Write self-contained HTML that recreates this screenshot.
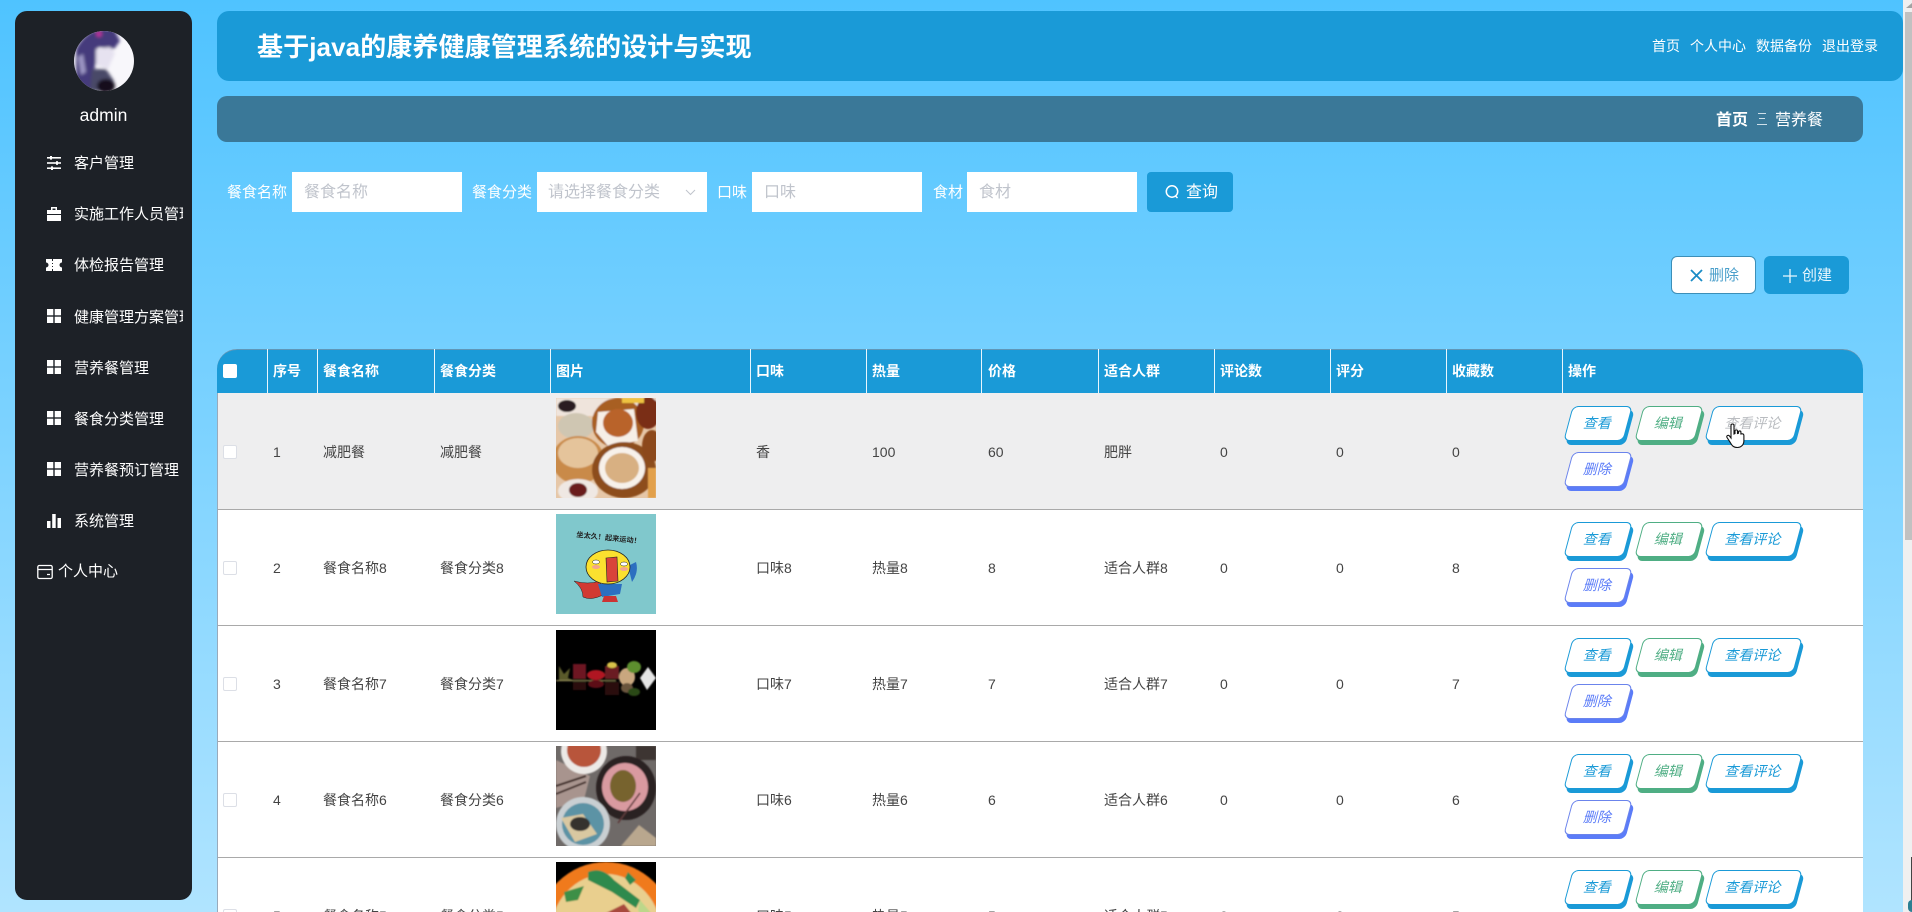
<!DOCTYPE html>
<html lang="zh"><head><meta charset="utf-8"><title>营养餐</title>
<style>
*{box-sizing:border-box}
html,body{margin:0;width:1912px;height:912px;overflow:hidden}
#root{position:absolute;left:0;top:0;width:1912px;height:912px;overflow:hidden;background:linear-gradient(180deg,#4fc3ff 0%,#b0e4ff 100%);font-family:"Liberation Sans","Noto Sans CJK SC",sans-serif;font-size:14px;color:#444}
.a{position:absolute;white-space:nowrap}
#side{position:absolute;left:15px;top:11px;width:177px;height:889px;background:#1d2127;border-radius:12px}
.mi{position:absolute;left:74px;width:109px;overflow:hidden;white-space:nowrap;color:#fff;font-size:15px;line-height:22px;height:22px}
.ic{position:absolute;left:46px;width:16px;height:16px}
#head{position:absolute;left:217px;top:11px;width:1686px;height:70px;background:#1a9ad7;border-radius:12px}
#crumb{position:absolute;left:217px;top:96px;width:1646px;height:46px;background:#3a7898;border-radius:10px}
.lb{position:absolute;top:183px;font-size:15px;line-height:20px;color:#fff}
.in{position:absolute;top:172px;width:170px;height:40px;background:#fff;color:#c0c4cc;font-size:16px;line-height:42px;padding-left:12px}
#tb{position:absolute;left:217px;top:349px;width:1646px;height:563px;background:#fff;border-left:1px solid #9ab;border-radius:20px 20px 0 0;overflow:hidden}
#th{position:absolute;left:217px;top:349px;width:1646px;height:44px;background:#1a9ad7;border-radius:20px 20px 0 0;border-top:1px solid #5f97b8}
.h{position:absolute;top:361px;color:#fff;font-weight:bold;font-size:14px;line-height:20px}
.sep{position:absolute;top:349px;width:1px;height:44px;background:#e8f6fd}
.line{position:absolute;left:218px;width:1645px;height:1px;background:#a9a9a9}
.t{position:absolute;line-height:20px;font-size:14px;color:#444;white-space:nowrap}
.cb{position:absolute;left:223px;width:14px;height:14px;background:#fff;border:1px solid #dcdfe6;border-radius:2px}
.b{position:absolute;height:35px;width:60px;transform:skewX(-15deg);background:#fff;border:1px solid;border-radius:6px;text-align:center;font-size:14px;line-height:33px}
.b1{color:#1a9ad7;border-color:#1a9ad7;box-shadow:3px 4px 0 #1a9ad7}
.b2{color:#4fae84;border-color:#4fae84;box-shadow:3px 4px 0 #4fae84}
.b3{color:#5b7cf8;border-color:#6b84ec;box-shadow:3px 4px 0 #5b7cf8}
.w{width:89px}
.img{position:absolute;left:556px;width:100px;height:100px}
</style></head><body><div id="root">

<div id="side"></div>
<svg class="a" style="left:74px;top:31px" width="60" height="60" viewBox="0 0 60 60">
<defs><clipPath id="cc"><circle cx="30" cy="30" r="30"/></clipPath><filter id="bl"><feGaussianBlur stdDeviation="1.500"/></filter><filter id="s"><feGaussianBlur stdDeviation=".7"/></filter></defs>
<g clip-path="url(#cc)"><rect width="60" height="60" fill="#f8f7fb"/>
<g filter="url(#bl)"><path d="M2 60V18C8 6 18-2 28-2h12l6 12-6 8-16-2-2 16-4 14-2 14z" fill="#453a7c"/><circle cx="25" cy="3" r="3" fill="#b8309a"/><path d="M22 18l14-2 5 6-7 16-12-4z" fill="#e6e2f0"/><path d="M18 38l14 0 8 12-8 10H16z" fill="#4a4868"/><ellipse cx="32" cy="55" rx="9" ry="7" fill="#14101c"/><path d="M4 26l5-3 3 18-5 3z" fill="#9c96c4"/></g></g></svg>
<div class="a" style="left:15px;top:104px;width:177px;text-align:center;color:#fff;font-size:17.5px;line-height:22px">admin</div>

<svg class="ic" style="top:155px" viewBox="0 0 16 16" fill="#fff"><rect x="1" y="2" width="14" height="1.600"/><rect x="1" y="7.200" width="14" height="1.600"/><rect x="1" y="12.400" width="14" height="1.600"/><rect x="4" y="1" width="2" height="3.600"/><rect x="10" y="6.200" width="2" height="3.600"/><rect x="5" y="11.400" width="2" height="3.600"/></svg>
<div class="mi" style="top:153px">客户管理</div>
<svg class="ic" style="top:206px" viewBox="0 0 16 16" fill="#fff"><path d="M5 1h6v3h4v4H1V4h4zM6.500 2.500V4h3V2.500zM1 9h14v6H1z"/></svg>
<div class="mi" style="top:204px">实施工作人员管理</div>
<svg class="ic" style="top:257px" viewBox="0 0 16 16" fill="#fff"><path d="M0 2h6v2h1V2h9v3.500a2.500 2.500 0 0 0 0 5V14H7v-2H6v2H0v-3.500a2.500 2.500 0 0 0 0-5zM6 6v1h1V6zm0 3v1h1V9z"/></svg>
<div class="mi" style="top:255px">体检报告管理</div>
<svg class="ic" style="top:308px" viewBox="0 0 16 16" fill="#fff"><rect x="1" y="1" width="6.300" height="6.300"/><rect x="8.700" y="1" width="6.300" height="6.300"/><rect x="1" y="8.700" width="6.300" height="6.300"/><rect x="8.700" y="8.700" width="6.300" height="6.300"/></svg>
<div class="mi" style="top:307px">健康管理方案管理</div>
<svg class="ic" style="top:359px" viewBox="0 0 16 16" fill="#fff"><rect x="1" y="1" width="6.300" height="6.300"/><rect x="8.700" y="1" width="6.300" height="6.300"/><rect x="1" y="8.700" width="6.300" height="6.300"/><rect x="8.700" y="8.700" width="6.300" height="6.300"/></svg>
<div class="mi" style="top:358px">营养餐管理</div>
<svg class="ic" style="top:410px" viewBox="0 0 16 16" fill="#fff"><rect x="1" y="1" width="6.300" height="6.300"/><rect x="8.700" y="1" width="6.300" height="6.300"/><rect x="1" y="8.700" width="6.300" height="6.300"/><rect x="8.700" y="8.700" width="6.300" height="6.300"/></svg>
<div class="mi" style="top:409px">餐食分类管理</div>
<svg class="ic" style="top:461px" viewBox="0 0 16 16" fill="#fff"><rect x="1" y="1" width="6.300" height="6.300"/><rect x="8.700" y="1" width="6.300" height="6.300"/><rect x="1" y="8.700" width="6.300" height="6.300"/><rect x="8.700" y="8.700" width="6.300" height="6.300"/></svg>
<div class="mi" style="top:460px">营养餐预订管理</div>
<svg class="ic" style="top:513px" viewBox="0 0 16 16" fill="#fff"><rect x="1" y="8" width="3.500" height="7"/><rect x="6.200" y="1" width="3.500" height="14"/><rect x="11.500" y="5" width="3.500" height="10"/></svg>
<div class="mi" style="top:511px">系统管理</div>
<svg class="ic" style="left:37px;top:564px" viewBox="0 0 16 16" fill="none" stroke="#fff" stroke-width="1.300"><rect x=".8" y="1.500" width="14.400" height="13" rx="1.500"/><path d="M1 5.500h14M10 10.500h3"/></svg>
<div class="mi" style="left:58px;top:561px">个人中心</div>

<div id="head"></div>
<div class="a" style="left:257px;top:30px;color:#fff;font-weight:bold;font-size:26px;letter-spacing:.1px;line-height:34px">基于java的康养健康管理系统的设计与实现</div>
<div class="a" style="left:1652px;top:36px;color:#fff;line-height:20px">首页</div>
<div class="a" style="left:1690px;top:36px;color:#fff;line-height:20px">个人中心</div>
<div class="a" style="left:1756px;top:36px;color:#fff;line-height:20px">数据备份</div>
<div class="a" style="left:1822px;top:36px;color:#fff;line-height:20px">退出登录</div>

<div id="crumb"></div>
<div class="a" style="left:1716px;top:110px;color:#fff;font-weight:bold;font-size:16px;line-height:22px">首页</div>
<svg class="a" style="left:1757px;top:113px" width="10" height="12" fill="#cfe0ea"><rect x="1" y="0" width="8" height="1"/><rect x="2" y="5" width="6" height="1"/><rect x="0" y="11" width="10" height="1"/></svg>
<div class="a" style="left:1775px;top:110px;color:#fff;font-size:16px;line-height:22px">营养餐</div>

<div class="lb" style="left:227px">餐食名称</div>
<div class="in" style="left:292px">餐食名称</div>
<div class="lb" style="left:472px">餐食分类</div>
<div class="in" style="left:537px;padding-left:11px">请选择餐食分类</div>
<svg class="a" style="left:685px;top:189px" width="11" height="7" fill="none" stroke="#c0c4cc" stroke-width="1"><path d="M1 1l4.500 4.500L10 1"/></svg>
<div class="lb" style="left:717px">口味</div>
<div class="in" style="left:752px">口味</div>
<div class="lb" style="left:933px">食材</div>
<div class="in" style="left:967px">食材</div>
<div class="a" style="left:1147px;top:172px;width:86px;height:40px;background:#1a9ad7;border-radius:4px"></div>
<svg class="a" style="left:1164px;top:184px" width="16" height="16" fill="none" stroke="#fff" stroke-width="1.500"><circle cx="8" cy="7.500" r="5.700"/><path d="M11.500 12l2 2"/></svg>
<div class="a" style="left:1186px;top:182px;color:#fff;font-size:16px;line-height:22px">查询</div>

<div class="a" style="left:1671px;top:256px;width:85px;height:38px;background:#fff;border:1px solid #3c8fb8;border-radius:6px"></div>
<svg class="a" style="left:1690px;top:269px" width="13" height="13" fill="none" stroke="#1a8cc6" stroke-width="1.800"><path d="M1 1l11 11M12 1L1 12"/></svg>
<div class="a" style="left:1709px;top:265px;color:#4a9fcb;font-size:15px;line-height:22px">删除</div>
<div class="a" style="left:1764px;top:256px;width:85px;height:38px;background:#1a9ad7;border-radius:6px"></div>
<svg class="a" style="left:1783px;top:269px" width="14" height="14" fill="none" stroke="#e8f6fd" stroke-width="1.300"><path d="M7 0v14M0 7h14"/></svg>
<div class="a" style="left:1802px;top:265px;color:#e8f6fd;font-size:15px;line-height:22px">创建</div>

<div id="tb"></div>
<div class="a" style="left:218px;top:393px;width:1645px;height:116px;background:#eeeeef"></div>
<div id="th"></div>
<div class="a" style="left:223px;top:364px;width:14px;height:14px;background:#fff;border-radius:2px"></div>
<div class="sep" style="left:267px"></div><div class="sep" style="left:317px"></div><div class="sep" style="left:434px"></div><div class="sep" style="left:550px"></div><div class="sep" style="left:750px"></div><div class="sep" style="left:866px"></div><div class="sep" style="left:981px"></div><div class="sep" style="left:1098px"></div><div class="sep" style="left:1214px"></div><div class="sep" style="left:1330px"></div><div class="sep" style="left:1446px"></div><div class="sep" style="left:1562px"></div>
<div class="h" style="left:273px">序号</div><div class="h" style="left:323px">餐食名称</div><div class="h" style="left:440px">餐食分类</div><div class="h" style="left:556px">图片</div><div class="h" style="left:756px">口味</div><div class="h" style="left:872px">热量</div><div class="h" style="left:988px">价格</div><div class="h" style="left:1104px">适合人群</div><div class="h" style="left:1220px">评论数</div><div class="h" style="left:1336px">评分</div><div class="h" style="left:1452px">收藏数</div><div class="h" style="left:1568px">操作</div>

<div class="line" style="top:509px"></div><div class="line" style="top:625px"></div><div class="line" style="top:741px"></div><div class="line" style="top:857px"></div>

<!-- row 1 -->
<div class="cb" style="top:445px"></div>
<div class="t" style="left:273px;top:442px">1</div><div class="t" style="left:323px;top:442px">减肥餐</div><div class="t" style="left:440px;top:442px">减肥餐</div><div class="t" style="left:756px;top:442px">香</div><div class="t" style="left:872px;top:442px">100</div><div class="t" style="left:988px;top:442px">60</div><div class="t" style="left:1104px;top:442px">肥胖</div><div class="t" style="left:1220px;top:442px">0</div><div class="t" style="left:1336px;top:442px">0</div><div class="t" style="left:1452px;top:442px">0</div>
<svg class="img" style="top:398px" viewBox="0 0 100 100"><rect width="100" height="100" fill="#e6c7a8"/><g filter="url(#s)"><rect width="100" height="18" fill="#efe4dc"/><ellipse cx="11" cy="8" rx="9" ry="6" fill="#2b1f22"/><ellipse cx="20" cy="28" rx="18" ry="13" fill="#cfc6b2"/><ellipse cx="62" cy="25" rx="26" ry="25" fill="#a85f22"/><path d="M42 14l36-3 4 32-30 5-12-14z" fill="#f6efe7"/><ellipse cx="62" cy="25" rx="15" ry="14" fill="#b9642c"/><ellipse cx="22" cy="62" rx="26" ry="24" fill="#c98a4a"/><ellipse cx="22" cy="55" rx="20" ry="15" fill="#e5c49b"/><ellipse cx="68" cy="72" rx="32" ry="28" fill="#8d4d1a"/><ellipse cx="66" cy="70" rx="23" ry="21" fill="#f7f1ea"/><ellipse cx="66" cy="70" rx="17" ry="15" fill="#d8b082"/><ellipse cx="22" cy="93" rx="20" ry="12" fill="#efe8e3"/><ellipse cx="22" cy="92" rx="9" ry="7" fill="#6a1a1c"/><ellipse cx="92" cy="15" rx="12" ry="16" fill="#7a2e17"/><path d="M66 0h22v5H66z" fill="#eec23f"/><ellipse cx="96" cy="48" rx="10" ry="16" fill="#8c4a1b"/><rect x="92" y="70" width="8" height="30" fill="#e2a04c"/></g></svg>
<div class="b b1" style="left:1568px;top:406px">查看</div><div class="b b2" style="left:1639px;top:406px">编辑</div><div class="b b1 w" style="left:1709px;top:406px;color:#b9bcc0">查看评论</div><div class="b b3" style="left:1568px;top:452px">删除</div>

<!-- row 2 -->
<div class="cb" style="top:561px"></div>
<div class="t" style="left:273px;top:558px">2</div><div class="t" style="left:323px;top:558px">餐食名称8</div><div class="t" style="left:440px;top:558px">餐食分类8</div><div class="t" style="left:756px;top:558px">口味8</div><div class="t" style="left:872px;top:558px">热量8</div><div class="t" style="left:988px;top:558px">8</div><div class="t" style="left:1104px;top:558px">适合人群8</div><div class="t" style="left:1220px;top:558px">0</div><div class="t" style="left:1336px;top:558px">0</div><div class="t" style="left:1452px;top:558px">8</div>
<svg class="img" style="top:514px" viewBox="0 0 100 100"><rect width="100" height="100" fill="#80c8cc"/><text x="20" y="26" font-size="7.200" font-weight="bold" fill="#222" transform="rotate(6 50 26)" font-family="'Noto Sans CJK SC',sans-serif">坐太久！起来运动！</text><path d="M18 67q14 4 26 0l3 14q-12 6-20 2 0-9-9-16z" fill="#d13a32" stroke="#222" stroke-width=".5"/><path d="M72 52l8-4q3 10-4 20z" fill="#2c6fc0"/><path d="M42 70h24l-2 10-18 3z" fill="#2c6fc0"/><path d="M48 82h12l2 6H46z" fill="#c33"/><ellipse cx="52" cy="53" rx="22" ry="17" fill="#fbe12f" stroke="#222" stroke-width=".8"/><path d="M50 44l11-1 1 24-11 1z" fill="#d9433a" stroke="#222" stroke-width=".6"/><ellipse cx="40" cy="48" rx="3.500" ry="2" fill="#fff" stroke="#222" stroke-width=".5"/><ellipse cx="68" cy="50" rx="3.500" ry="2" fill="#fff" stroke="#222" stroke-width=".5"/><ellipse cx="40" cy="53" rx="4" ry="2" fill="#f3a58d"/><ellipse cx="68" cy="55" rx="4" ry="2" fill="#f3a58d"/></svg>
<div class="b b1" style="left:1568px;top:522px">查看</div><div class="b b2" style="left:1639px;top:522px">编辑</div><div class="b b1 w" style="left:1709px;top:522px">查看评论</div><div class="b b3" style="left:1568px;top:568px">删除</div>

<!-- row 3 -->
<div class="cb" style="top:677px"></div>
<div class="t" style="left:273px;top:674px">3</div><div class="t" style="left:323px;top:674px">餐食名称7</div><div class="t" style="left:440px;top:674px">餐食分类7</div><div class="t" style="left:756px;top:674px">口味7</div><div class="t" style="left:872px;top:674px">热量7</div><div class="t" style="left:988px;top:674px">7</div><div class="t" style="left:1104px;top:674px">适合人群7</div><div class="t" style="left:1220px;top:674px">0</div><div class="t" style="left:1336px;top:674px">0</div><div class="t" style="left:1452px;top:674px">7</div>
<svg class="img" style="top:630px" viewBox="0 0 100 100"><rect width="100" height="100" fill="#000"/><g filter="url(#s)"><path d="M3 36l5 8 6-6-2 10 5 2-14 0z" fill="#5a5a2c"/><rect x="17" y="34" width="13" height="15" fill="#6d1422"/><ellipse cx="40" cy="45" rx="9" ry="5" fill="#b01424"/><rect x="49" y="36" width="14" height="13" fill="#6a1a20"/><ellipse cx="56" cy="35" rx="5" ry="3" fill="#d8c24a"/><ellipse cx="71" cy="47" rx="8" ry="9" fill="#c9a77f"/><ellipse cx="78" cy="37" rx="7" ry="6" fill="#5d8f2d"/><path d="M84 48l8-11 8 11-9 12z" fill="#e5e5e5"/><rect x="0" y="50" width="60" height="1.200" fill="#8f8a55"/><rect x="17" y="52" width="13" height="8" fill="#2b0a10"/><ellipse cx="40" cy="54" rx="8" ry="4" fill="#5d0a14"/><rect x="49" y="52" width="14" height="13" fill="#2b0a10"/><ellipse cx="71" cy="58" rx="6" ry="5" fill="#6b553e"/><ellipse cx="78" cy="62" rx="6" ry="4" fill="#2c4a18"/></g></svg>
<div class="b b1" style="left:1568px;top:638px">查看</div><div class="b b2" style="left:1639px;top:638px">编辑</div><div class="b b1 w" style="left:1709px;top:638px">查看评论</div><div class="b b3" style="left:1568px;top:684px">删除</div>

<!-- row 4 -->
<div class="cb" style="top:793px"></div>
<div class="t" style="left:273px;top:790px">4</div><div class="t" style="left:323px;top:790px">餐食名称6</div><div class="t" style="left:440px;top:790px">餐食分类6</div><div class="t" style="left:756px;top:790px">口味6</div><div class="t" style="left:872px;top:790px">热量6</div><div class="t" style="left:988px;top:790px">6</div><div class="t" style="left:1104px;top:790px">适合人群6</div><div class="t" style="left:1220px;top:790px">0</div><div class="t" style="left:1336px;top:790px">0</div><div class="t" style="left:1452px;top:790px">6</div>
<svg class="img" style="top:746px" viewBox="0 0 100 100"><rect width="100" height="100" fill="#6f6a68"/><g filter="url(#s)"><rect x="80" y="0" width="20" height="14" fill="#3e3533"/><path d="M0 14l34 16-6 24-28 8z" fill="#a8948e"/><path d="M0 40l30-10M0 48l30-12" stroke="#3d2a25" stroke-width="2"/><ellipse cx="28" cy="5" rx="23" ry="23" fill="#ece9e6"/><ellipse cx="28" cy="4" rx="17" ry="17" fill="#b8553a"/><ellipse cx="70" cy="42" rx="30" ry="32" fill="#2a2324"/><ellipse cx="69" cy="41" rx="23" ry="24" fill="#d99aa0"/><ellipse cx="67" cy="40" rx="13" ry="16" fill="#77642f"/><path d="M62 77l22-30" stroke="#5d3a3a" stroke-width="1.500"/><ellipse cx="27" cy="78" rx="27" ry="27" fill="#c9cfd2"/><ellipse cx="27" cy="78" rx="21" ry="21" fill="#5c93a5"/><path d="M5 72l22-4 14 20-22 8z" fill="#d9c8a1"/><ellipse cx="24" cy="78" rx="10" ry="7" fill="#35302f"/><path d="M65 100l18-21 17 13v8z" fill="#b9a78e"/></g></svg>
<div class="b b1" style="left:1568px;top:754px">查看</div><div class="b b2" style="left:1639px;top:754px">编辑</div><div class="b b1 w" style="left:1709px;top:754px">查看评论</div><div class="b b3" style="left:1568px;top:800px">删除</div>

<!-- row 5 -->
<div class="cb" style="top:909px"></div>
<div class="t" style="left:273px;top:906px">5</div><div class="t" style="left:323px;top:906px">餐食名称5</div><div class="t" style="left:440px;top:906px">餐食分类5</div><div class="t" style="left:756px;top:906px">口味5</div><div class="t" style="left:872px;top:906px">热量5</div><div class="t" style="left:988px;top:906px">5</div><div class="t" style="left:1104px;top:906px">适合人群5</div><div class="t" style="left:1220px;top:906px">0</div><div class="t" style="left:1336px;top:906px">0</div><div class="t" style="left:1452px;top:906px">5</div>
<svg class="img" style="top:862px" viewBox="0 0 100 100"><rect width="100" height="100" fill="#000"/><g filter="url(#s)"><ellipse cx="50" cy="68" rx="68" ry="68" fill="#f07a1c"/><ellipse cx="50" cy="74" rx="56" ry="62" fill="#e9cf8e"/><path d="M32 10q14-6 26 8l26 20-4 8-24-16-24-12z" fill="#2d8a4e"/><path d="M8 30l20-6-6 14-12 2z" fill="#3c8f46"/><path d="M44 54l24-12 8 10-24 12z" fill="#a8483e"/><path d="M84 38l12 14-6 12-8-16z" fill="#bcd78a"/><path d="M72 10l8 8-6 5-5-7z" fill="#2d8a4e"/></g></svg>
<div class="b b1" style="left:1568px;top:870px">查看</div><div class="b b2" style="left:1639px;top:870px">编辑</div><div class="b b1 w" style="left:1709px;top:870px">查看评论</div>

<!-- cursor -->
<svg class="a" style="left:1726px;top:423px" width="20" height="26" viewBox="0 0 20 26"><path d="M5 2.500c0-2 3-2 3 0V11l1-.5V8c0-1.500 2.500-1.500 2.500 0v2.500l1-.3V9c0-1.400 2.400-1.400 2.400 0v2l1-.2c1.300-.2 2 .6 2 1.800v5c0 4-2.500 6.900-6.500 6.900s-5.500-2-7-4.800L1 14.500c-1-1.600 1.200-3 2.500-1.500L5 15z" fill="#fff" stroke="#111" stroke-width="1.100"/></svg>

<!-- scrollbar -->
<div class="a" style="left:1903px;top:0;width:9px;height:912px;background:#f0f0f0"></div>
<div class="a" style="left:1905px;top:12px;width:7px;height:528px;background:#c1c1c1"></div>
<svg class="a" style="left:1906px;top:3px" width="6" height="5"><path d="M0 5L6 0v5z" fill="#a3a3a3"/></svg>
<div class="a" style="left:1911px;top:857px;width:1px;height:46px;background:#444"></div>
<div class="a" style="left:1908px;top:900px;width:4px;height:12px;border-radius:4px 0 0 4px;background:#2c7f92"></div>
</div></body></html>
